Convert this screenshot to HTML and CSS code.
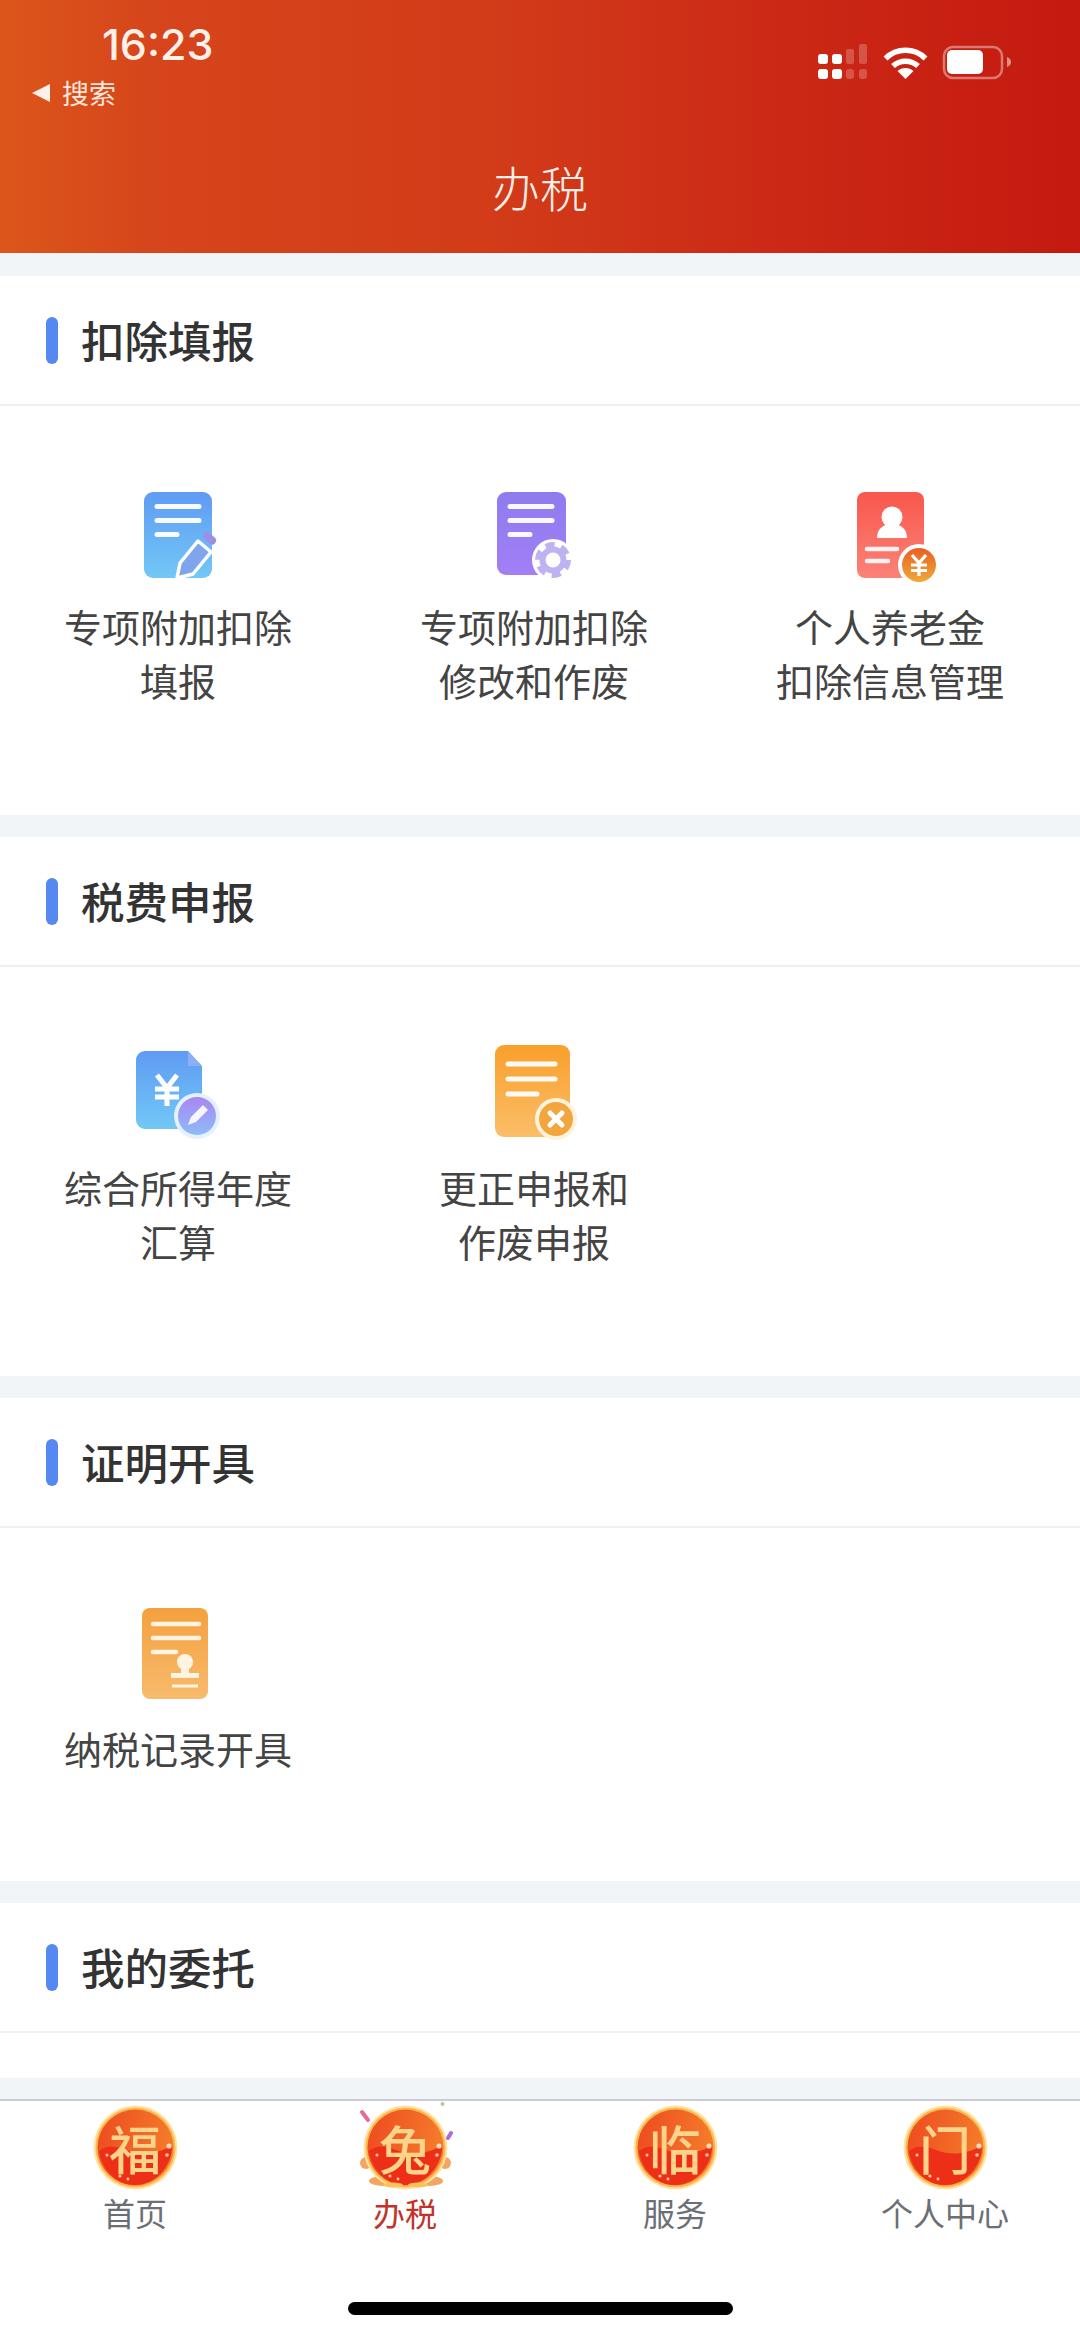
FILE: index.html
```html
<!DOCTYPE html>
<html lang="zh-CN">
<head>
    <meta charset="UTF-8">
    <meta name="viewport" content="width=device-width, initial-scale=1.0">
    <title>办税</title>
    <link rel="stylesheet" href="styles.css">
</head>
<body>
    <!-- shared gradients and the tab coin -->
    <svg class="svg-defs" aria-hidden="true">
        <defs>
            <linearGradient id="g-blue" x1="0" y1="0" x2="0" y2="1"><stop offset="0" stop-color="#5f9bf3"/><stop offset="1" stop-color="#72c8f6"/></linearGradient>
            <linearGradient id="g-purple" x1="0" y1="0" x2="0" y2="1"><stop offset="0" stop-color="#8f7bef"/><stop offset="1" stop-color="#a27ff6"/></linearGradient>
            <linearGradient id="g-red" x1="0" y1="0" x2="0" y2="1"><stop offset="0" stop-color="#f9574c"/><stop offset="1" stop-color="#fb8278"/></linearGradient>
            <linearGradient id="g-orange" x1="0" y1="0" x2="0" y2="1"><stop offset="0" stop-color="#f99f2c"/><stop offset="1" stop-color="#fbbe68"/></linearGradient>
            <linearGradient id="g-amber" x1="0" y1="0" x2="0" y2="1"><stop offset="0" stop-color="#f4a03e"/><stop offset="1" stop-color="#f7bb6d"/></linearGradient>
            <linearGradient id="g-yuan" x1="0" y1="0" x2="0" y2="1"><stop offset="0" stop-color="#ea5f22"/><stop offset="1" stop-color="#eeaa38"/></linearGradient>
            <linearGradient id="g-edit" x1="0" y1="0" x2="0" y2="1"><stop offset="0" stop-color="#ab86f2"/><stop offset="1" stop-color="#8cbcf7"/></linearGradient>
            <linearGradient id="g-coin" x1="0" y1="0" x2="1" y2="0.2"><stop offset="0" stop-color="#ee4a20"/><stop offset="1" stop-color="#f47a2a"/></linearGradient>
            <symbol id="coin" viewBox="-10 -10 105 105">
                <circle cx="42.5" cy="42.5" r="42" fill="#fde3a6"/>
                <circle cx="42.5" cy="42.5" r="40" fill="#f9b94f"/>
                <circle cx="42.5" cy="42.5" r="38" fill="url(#g-coin)"/>
                <path d="M6 46c10-8 20-4 30 0s28 4 43-6c1 18-14 40-37 40C22 80 9 64 6 46z" fill="#ee2f18"/>
                <circle cx="76" cy="41" r="2.6" fill="#ffdcb8"/>
                <circle cx="74" cy="50" r="1.8" fill="#ffc9a0"/>
                <circle cx="27" cy="71" r="1.6" fill="#ffc9a0"/>
                <circle cx="35" cy="74" r="1.4" fill="#ffc9a0"/>
                <circle cx="14" cy="50" r="1.5" fill="#ffc9a0"/>
            </symbol>
        </defs>
    </svg>

    <header class="top-header">
        <div class="status-bar">
            <div class="status-left">
                <div class="status-time">16:23</div>
                <div class="status-back"><span class="back-arrow"></span>搜索</div>
            </div>
            <svg class="status-icons" width="200" height="40" viewBox="0 0 200 40">
                <g fill="#fff">
                    <rect x="3" y="13" width="10" height="10" rx="3"/>
                    <rect x="17" y="13" width="10" height="10" rx="3"/>
                    <rect x="3" y="28" width="10" height="10" rx="3"/>
                    <rect x="17" y="28" width="10" height="10" rx="3"/>
                </g>
                <g fill="#fff" opacity="0.22">
                    <rect x="31" y="8" width="8" height="15" rx="2"/>
                    <rect x="44" y="3" width="8" height="20" rx="2"/>
                    <rect x="31" y="28" width="8" height="10" rx="3"/>
                    <rect x="44" y="28" width="8" height="10" rx="3"/>
                </g>
                <g fill="none" stroke="#fff" stroke-width="5.5">
                    <path d="M70.500 17.500c11-11 29-11 40 0"/>
                    <path d="M78 25c7-6.500 18-6.500 25 0"/>
                </g>
                <path d="M90.500 38l-8-8c4.500-4 11.500-4 16 0z" fill="#fff"/>
                <rect x="129" y="6" width="58" height="31" rx="9" fill="none" stroke="#fff" stroke-opacity="0.4" stroke-width="2.500"/>
                <rect x="132" y="9" width="36" height="24" rx="5" fill="#fff"/>
                <path d="M192 16c3 1 4 3 4 5s-1 4-4 5z" fill="#fff" fill-opacity="0.5"/>
            </svg>
        </div>
        <div class="page-title">办税</div>
    </header>

    <main class="page-main">
        <section class="group">
            <h2 class="group-head"><span class="head-bar"></span>扣除填报</h2>
            <div class="tile-grid">
                <div class="tile">
                    <svg class="tile-icon" viewBox="0 0 120 110">
                        <rect x="26" y="10" width="68" height="86" rx="9" fill="url(#g-blue)"/>
                        <g stroke="#fff" stroke-width="5" stroke-linecap="round" opacity="0.95">
                            <path d="M39 24.500h42M39 38.500h42M39 52.500h20"/>
                        </g>
                        <path d="M59 96l3-15 18-22 13 11-18 22z" fill="#7fa5ee" stroke="#fff" stroke-width="3.500" stroke-linejoin="round"/>
                        <path d="M89 54l5 4.500" stroke="#9c90e6" stroke-width="8" stroke-linecap="round"/>
                    </svg>
                    <div class="tile-label">专项附加扣除<br>填报</div>
                </div>
                <div class="tile">
                    <svg class="tile-icon" viewBox="0 0 120 110">
                        <rect x="23" y="10" width="69" height="83" rx="9" fill="url(#g-purple)"/>
                        <g stroke="#fff" stroke-width="5" stroke-linecap="round" opacity="0.95">
                            <path d="M36 24.500h42M36 38.500h42M36 52.500h20"/>
                        </g>
                        <circle cx="79" cy="78" r="21" fill="#fff"/>
                        <circle cx="79" cy="78" r="15" fill="none" stroke="#bfb2f0" stroke-width="6" stroke-dasharray="9 6.710"/>
                        <circle cx="79" cy="78" r="10.500" fill="none" stroke="#bfb2f0" stroke-width="6"/>
                    </svg>
                    <div class="tile-label">专项附加扣除<br>修改和作废</div>
                </div>
                <div class="tile">
                    <svg class="tile-icon" viewBox="0 0 120 110">
                        <rect x="27" y="10" width="67" height="86" rx="8" fill="url(#g-red)"/>
                        <circle cx="62" cy="35" r="10.500" fill="#fff"/>
                        <path d="M47 56c0-9 6-14 15-14s15 5 15 14z" fill="#fff"/>
                        <g stroke="#fff" stroke-width="4.500" stroke-linecap="round" opacity="0.9">
                            <path d="M37 67h30M37 79h21"/>
                        </g>
                        <circle cx="89" cy="83" r="21" fill="#fff"/>
                        <circle cx="89" cy="83" r="17" fill="url(#g-yuan)"/>
                        <path d="M82 73l7 8 7-8M89 81v13M81 83h16M81 88.500h16" fill="none" stroke="#fff" stroke-width="3.200"/>
                    </svg>
                    <div class="tile-label">个人养老金<br>扣除信息管理</div>
                </div>
            </div>
        </section>

        <section class="group">
            <h2 class="group-head"><span class="head-bar"></span>税费申报</h2>
            <div class="tile-grid">
                <div class="tile">
                    <svg class="tile-icon" viewBox="0 0 120 110">
                        <path d="M27 8h43l14 15v54a9 9 0 0 1-9 9H27a9 9 0 0 1-9-9V17a9 9 0 0 1 9-9z" fill="url(#g-blue)"/>
                        <path d="M70 8l14 15H70z" fill="#8bb0f5"/>
                        <path d="M39 32l10 13 10-13M49 45v18M37 46h24M37 54h24" fill="none" stroke="#fff" stroke-width="5"/>
                        <circle cx="79" cy="73" r="23" fill="#e4f1fe"/>
                        <circle cx="79" cy="73" r="19" fill="url(#g-edit)"/>
                        <path d="M70 82l3-8 12-12 5 5-12 12z" fill="#fff" opacity="0.9"/>
                    </svg>
                    <div class="tile-label">综合所得年度<br>汇算</div>
                </div>
                <div class="tile">
                    <svg class="tile-icon" viewBox="0 0 120 110">
                        <rect x="21" y="2" width="75" height="92" rx="9" fill="url(#g-orange)"/>
                        <g stroke="#fff" stroke-width="5" stroke-linecap="round" opacity="0.95">
                            <path d="M34 21h47M34 36h47M34 51h29"/>
                        </g>
                        <circle cx="82" cy="76" r="21" fill="#fff3df"/>
                        <circle cx="82" cy="76" r="17" fill="#f2a63e"/>
                        <path d="M76 70l12 12M88 70L76 82" stroke="#fff" stroke-width="5" stroke-linecap="round"/>
                    </svg>
                    <div class="tile-label">更正申报和<br>作废申报</div>
                </div>
            </div>
        </section>

        <section class="group">
            <h2 class="group-head"><span class="head-bar"></span>证明开具</h2>
            <div class="tile-grid tile-grid-short">
                <div class="tile">
                    <svg class="tile-icon" viewBox="0 0 120 110">
                        <rect x="24" y="4" width="66" height="91" rx="8" fill="url(#g-amber)"/>
                        <g stroke="#fff4e2" stroke-width="4.500" stroke-linecap="round">
                            <path d="M35 20h46M35 34h46M35 48h23"/>
                        </g>
                        <circle cx="67" cy="58" r="8" fill="#fff4e2"/>
                        <path d="M63 62h8v7h10v5H53v-5h10z" fill="#fff4e2"/>
                        <path d="M54 82h26" stroke="#fff4e2" stroke-width="3"/>
                    </svg>
                    <div class="tile-label">纳税记录开具</div>
                </div>
            </div>
        </section>

        <section class="group group-empty">
            <h2 class="group-head"><span class="head-bar"></span>我的委托</h2>
        </section>
    </main>

    <nav class="tabbar">
        <div class="tab-row">
            <div class="tab">
                <div class="coin"><svg class="coin-art" viewBox="-10 -10 105 105"><use href="#coin" x="-10" y="-10" width="105" height="105"/></svg><span class="coin-char">福</span></div>
                <div class="tab-label">首页</div>
            </div>
            <div class="tab tab-active">
                <div class="coin">
                    <svg class="coin-art" viewBox="-10 -10 105 105">
                        <g fill="#f4a561">
                            <circle cx="3" cy="58" r="6"/>
                            <circle cx="82" cy="58" r="6"/>
                            <ellipse cx="20" cy="76" rx="14" ry="5"/>
                            <ellipse cx="66" cy="76" rx="14" ry="5"/>
                        </g>
                        <use href="#coin" x="-10" y="-10" width="105" height="105"/>
                        <path d="M-1 7l6 8" stroke="#e76a94" stroke-width="4" stroke-linecap="round"/>
                        <path d="M85 33l3-5" stroke="#a86be0" stroke-width="4" stroke-linecap="round"/>
                        <circle cx="79.500" cy="-1" r="2" fill="#b9c48e"/>
                        <g fill="#f7c35a"><ellipse cx="30" cy="80" rx="10" ry="2.500"/><ellipse cx="55" cy="80" rx="10" ry="2.500"/></g>
                    </svg>
                    <span class="coin-char">兔</span>
                </div>
                <div class="tab-label">办税</div>
            </div>
            <div class="tab">
                <div class="coin"><svg class="coin-art" viewBox="-10 -10 105 105"><use href="#coin" x="-10" y="-10" width="105" height="105"/></svg><span class="coin-char">临</span></div>
                <div class="tab-label">服务</div>
            </div>
            <div class="tab">
                <div class="coin"><svg class="coin-art" viewBox="-10 -10 105 105"><use href="#coin" x="-10" y="-10" width="105" height="105"/></svg><span class="coin-char">门</span></div>
                <div class="tab-label">个人中心</div>
            </div>
        </div>
        <div class="home-bar"></div>
    </nav>
</body>
</html>
```

FILE: styles.css
```css
html, body {
    margin: 0;
    padding: 0;
}
body {
    width: 1080px;
    height: 2336px;
    overflow: hidden;
    display: flex;
    flex-direction: column;
    background-color: #fff;
    font-family: "Noto Sans CJK SC", "Noto Sans", sans-serif;
}
.svg-defs {
    display: block;
    width: 0;
    height: 0;
}

/* red header */
.top-header {
    height: 253px;
    flex: none;
    background: linear-gradient(90deg, #dc561b 0%, #d6451b 14%, #d23c19 45%, #cc2a16 70%, #c41a10 100%);
    color: #fff;
}
.status-bar {
    display: flex;
    justify-content: space-between;
    padding: 22px 65px 0 32px;
    height: 88px;
}
.status-time {
    margin-left: 70px;
    font-family: Inter, sans-serif;
    font-size: 43px;
    font-weight: 500;
    line-height: 44px;
    color: #fdf0e8;
}
.status-back {
    display: flex;
    align-items: center;
    margin-top: 7px;
    font-size: 27px;
    line-height: 40px;
    color: #fbe6da;
}
.back-arrow {
    width: 0;
    height: 0;
    margin-right: 12px;
    border-top: 9px solid transparent;
    border-bottom: 9px solid transparent;
    border-right: 18px solid #fdf0e8;
}
.status-icons {
    margin-top: 19px;
}
.page-title {
    margin-top: 46px;
    text-align: center;
    font-size: 48px;
    font-weight: 300;
    line-height: 60px;
    color: #fdeee6;
}

/* sections */
.page-main {
    height: 1846px;
    flex: none;
    background-color: #f2f5f8;
    padding-top: 23px;
    box-sizing: border-box;
}
.group {
    background-color: #fff;
    margin-bottom: 22px;
}
.group-empty {
    height: 175px;
}
.group-head {
    display: flex;
    align-items: center;
    gap: 23px;
    height: 128px;
    margin: 0;
    padding-left: 46px;
    border-bottom: 2px solid #eff0f2;
    font-size: 43.500px;
    font-weight: 500;
    line-height: 124px;
    color: #333;
}
.head-bar {
    width: 12px;
    height: 47px;
    border-radius: 6px;
    background-color: #5588f0;
}
.tile-grid {
    display: grid;
    grid-template-columns: repeat(3, 356px);
    height: 333px;
    padding-top: 76px;
}
.tile-grid-short {
    height: 277px;
}
.tile {
    display: flex;
    flex-direction: column;
    align-items: center;
}
.tile-icon {
    width: 120px;
    height: 110px;
    display: block;
}
.tile-label {
    margin-top: 7px;
    text-align: center;
    font-size: 38px;
    line-height: 54px;
    color: #444;
}

/* bottom tabs */
.tabbar {
    flex: 1;
    display: flex;
    flex-direction: column;
    align-items: center;
    border-top: 2px solid #c9ccd2;
    background-color: #fff;
}
.tab-row {
    display: grid;
    grid-template-columns: repeat(4, 270px);
}
.tab {
    display: flex;
    flex-direction: column;
    align-items: center;
    padding-top: 4px;
}
.coin {
    position: relative;
    width: 85px;
    height: 85px;
    display: flex;
    align-items: center;
    justify-content: center;
}
.coin-art {
    position: absolute;
    left: -10px;
    top: -10px;
    width: 105px;
    height: 105px;
}
.coin-char {
    position: relative;
    font-size: 52px;
    font-weight: 500;
    line-height: 85px;
    color: #fbd48c;
}
.tab-label {
    font-size: 32px;
    line-height: 45px;
    color: #6b6f75;
}
.tab-active .tab-label {
    color: #c2332b;
}
.home-bar {
    width: 385px;
    height: 13px;
    margin-top: 67px;
    border-radius: 7px;
    background-color: #000;
}
```
